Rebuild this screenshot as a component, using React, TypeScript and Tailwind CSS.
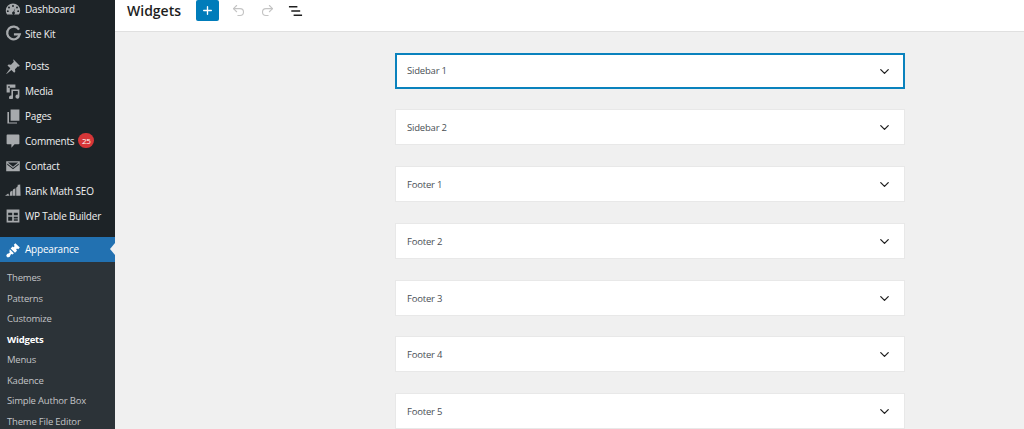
import { ReactNode } from "react";
import { Plus, Undo2, Redo2, ChevronDown } from "lucide-react";

const icon = "h-[16px] w-[16px] fill-[#a7aaad]";

const GaugeIcon = () => (
  <svg viewBox="0 0 20 20" className={icon}>
    <path d="M10 3a9 9 0 0 0-9 9c0 1.900.6 3.600 1.600 5h14.800A9 9 0 0 0 19 12a9 9 0 0 0-9-9zm0 2a1.200 1.200 0 1 1 0 2.400A1.200 1.200 0 0 1 10 5zM5 7a1.200 1.200 0 1 1 0 2.400A1.200 1.200 0 0 1 5 7zm10 0a1.200 1.200 0 1 1 0 2.400A1.200 1.200 0 0 1 15 7zm-2.200 1.800-1.300 4.700a1.800 1.800 0 1 1-2.400.6 1.800 1.800 0 0 1 1.500-.9zM3.500 11.500a1.200 1.200 0 1 1 0 2.400 1.200 1.200 0 0 1 0-2.400zm13 0a1.200 1.200 0 1 1 0 2.400 1.200 1.200 0 0 1 0-2.400z" fillRule="evenodd" />
  </svg>
);
const GIcon = () => (
  <svg viewBox="0 0 20 20" className="h-[17px] w-[17px] fill-none stroke-[#a7aaad] stroke-[2.600]">
    <path d="M16.500 5.500A7.500 7.500 0 1 0 17.400 11H10.500" />
  </svg>
);
const PinIcon = () => (
  <svg viewBox="0 0 20 20" className={icon}>
    <path d="M10.400 1.500 18.500 9.600l-1.400 1.400-1-.6-3.600 3.600.4 3-1.400 1.400-3.500-3.500L2 20l-.4-.4 5-6.700-3.500-3.500 1.400-1.400 3 .4 3.600-3.600-.6-1z" />
  </svg>
);
const MediaIcon = () => (
  <svg viewBox="0 0 20 20" className={icon}>
    <path d="M2 2h11v4H6v6H2zm2 2v2h2V4zM8 8h10v9a2.500 2.500 0 1 1-2-2.400V10h-6v8a2.500 2.500 0 1 1-2-2.400z" fillRule="evenodd" />
  </svg>
);
const PagesIcon = () => (
  <svg viewBox="0 0 20 20" className={icon}>
    <path d="M7 2h11v14H7zM3 5h2v13h10v1.500H3z" />
  </svg>
);
const CommentIcon = () => (
  <svg viewBox="0 0 20 20" className={icon}>
    <path d="M3 2h14a1 1 0 0 1 1 1v10a1 1 0 0 1-1 1h-5l-4 4.500V14H3a1 1 0 0 1-1-1V3a1 1 0 0 1 1-1z" />
  </svg>
);
const MailIcon = () => (
  <svg viewBox="0 0 20 20" className={icon}>
    <path d="M1.500 4h17v12.500h-17zM3.500 5.500 10 11l6.500-5.500z M2.800 7v1.500L10 14l7.200-5.500V7L10 12.500z" fillRule="evenodd" />
  </svg>
);
const RankIcon = () => (
  <svg viewBox="0 0 20 20" className={icon}>
    <path d="M0 16l4-3 1.500 3zM6 16l.5-5 3-1.500V16zM10 16V8l3-1.500V16zM14 16V6l2.500-2.500L15 2.500 19 2l.5 14z" />
  </svg>
);
const TableIcon = () => (
  <svg viewBox="0 0 20 20" className={icon}>
    <path d="M2 2h16v16H2zm2 4v3h5V6zm7 0v3h5V6zm-7 5v5h5v-5zm7 0v2h5v-2zm0 3v2h5v-2z" fillRule="evenodd" />
  </svg>
);
const BrushIcon = () => (
  <svg viewBox="0 0 20 20" className="h-[16px] w-[16px] fill-white">
    <path d="M13 1.500 18.500 7l-2 2-1.500-1-1 1.500 1 1.500-2.500 2.500L7 8l2.500-2.500L11 6.500 12 5l-1-1.500zM6 9l5 5-1.500 1.500-1.500-.5-1 1-1 2.500-2.500 1-2-2 1-2.500 2.500-1 1-1-.5-1.500z" />
  </svg>
);

const topItems: { label: string; icon: ReactNode; badge?: string; gap?: boolean }[] = [
  { label: "Dashboard", icon: <GaugeIcon /> },
  { label: "Site Kit", icon: <GIcon /> },
  { label: "Posts", icon: <PinIcon />, gap: true },
  { label: "Media", icon: <MediaIcon /> },
  { label: "Pages", icon: <PagesIcon /> },
  { label: "Comments", icon: <CommentIcon />, badge: "25" },
  { label: "Contact", icon: <MailIcon /> },
  { label: "Rank Math SEO", icon: <RankIcon /> },
  { label: "WP Table Builder", icon: <TableIcon /> },
];

const subItems = [
  "Themes",
  "Patterns",
  "Customize",
  "Widgets",
  "Menus",
  "Kadence",
  "Simple Author Box",
  "Theme File Editor",
];

const areas = ["Sidebar 1", "Sidebar 2", "Footer 1", "Footer 2", "Footer 3", "Footer 4", "Footer 5"];

function Sidebar() {
  return (
    <aside className="flex h-full w-[115px] shrink-0 flex-col overflow-hidden bg-[#1d2327] text-[10px] tracking-[-0.2px] text-[#f0f0f1]">
      <ul className="-mt-[4px] flex flex-col">
        {topItems.map((item) => (
          <li
            key={item.label}
            className={`flex h-[25px] items-center ${item.gap ? "mt-[7px]" : ""}`}
          >
            <span className="flex w-[25px] shrink-0 justify-center pl-[1px]">{item.icon}</span>
            <span className="pt-[1px]">{item.label}</span>
            {item.badge && (
              <span className="ml-[4px] flex h-[15px] w-[16px] items-center justify-center rounded-full bg-[#d63638] text-[8px] text-white">
                {item.badge}
              </span>
            )}
          </li>
        ))}
      </ul>
      <div className="relative mt-[9px] flex h-[25px] shrink-0 items-center bg-[#2271b1] text-white">
        <span className="flex w-[25px] shrink-0 justify-center pl-[1px]">
          <BrushIcon />
        </span>
        <span>Appearance</span>
        <span className="absolute right-0 top-[6px] h-0 w-0 border-y-[6px] border-r-[5px] border-y-transparent border-r-[#f0f0f1]" />
      </div>
      <ul className="flex flex-1 flex-col bg-[#2c3338] pt-[6px] text-[9.500px] text-[#c3c4c7]">
        {subItems.map((s) => (
          <li
            key={s}
            className={`flex h-[20.500px] shrink-0 items-center pl-[7px] ${s === "Widgets" ? "font-bold text-white" : ""}`}
          >
            {s}
          </li>
        ))}
      </ul>
    </aside>
  );
}

function Toolbar() {
  return (
    <header className="flex h-[32px] shrink-0 items-center border-b border-[#e0e0e0] bg-white pl-[12px]">
      <h1 className="-mt-[10px] text-[14px] font-semibold text-[#1e1e1e]">Widgets</h1>
      <button className="-mt-[10px] ml-[15px] flex h-[21px] w-[23px] items-center justify-center rounded-[2px] bg-[#007cba] text-white">
        <Plus size={13} strokeWidth={2.5} />
      </button>
      <Undo2 size={15} strokeWidth={1.75} className="-mt-[10px] ml-[12px] text-[#c4c4c4]" />
      <Redo2 size={15} strokeWidth={1.75} className="-mt-[10px] ml-[14px] text-[#c4c4c4]" />
      <svg viewBox="0 0 16 12" className="-mt-[10px] ml-[13px] h-[12px] w-[15px] stroke-[#1e1e1e] stroke-[1.500]">
        <path d="M1 1.500h9M3.500 6H13M6 10.500h9" />
      </svg>
    </header>
  );
}

function AreaCard({ label, active }: { label: string; active?: boolean }) {
  return (
    <div
      className={`flex h-[36px] shrink-0 items-center justify-between bg-white pt-[1px] text-[9.500px] font-medium tracking-[-0.2px] text-[#4a4f55] ${
        active ? "border-2 border-[#0a82bd] pl-[10px] pr-[11px]" : "border border-[#e8e8e8] pl-[11px] pr-[12px]"
      }`}
    >
      <span className="pt-[1px]">{label}</span>
      <ChevronDown size={15} strokeWidth={2} className="text-[#1e1e1e]" />
    </div>
  );
}

export default function App() {
  return (
    <div className="flex h-[429px] w-[1024px] overflow-hidden font-['Open_Sans',sans-serif]">
      <Sidebar />
      <main className="flex flex-1 flex-col overflow-hidden bg-[#f0f0f0]">
        <Toolbar />
        <div className="flex flex-col gap-[20.800px] pl-[280px] pr-[119px] pt-[20.500px]">
          {areas.map((a, i) => (
            <AreaCard key={a} label={a} active={i === 0} />
          ))}
        </div>
      </main>
    </div>
  );
}
